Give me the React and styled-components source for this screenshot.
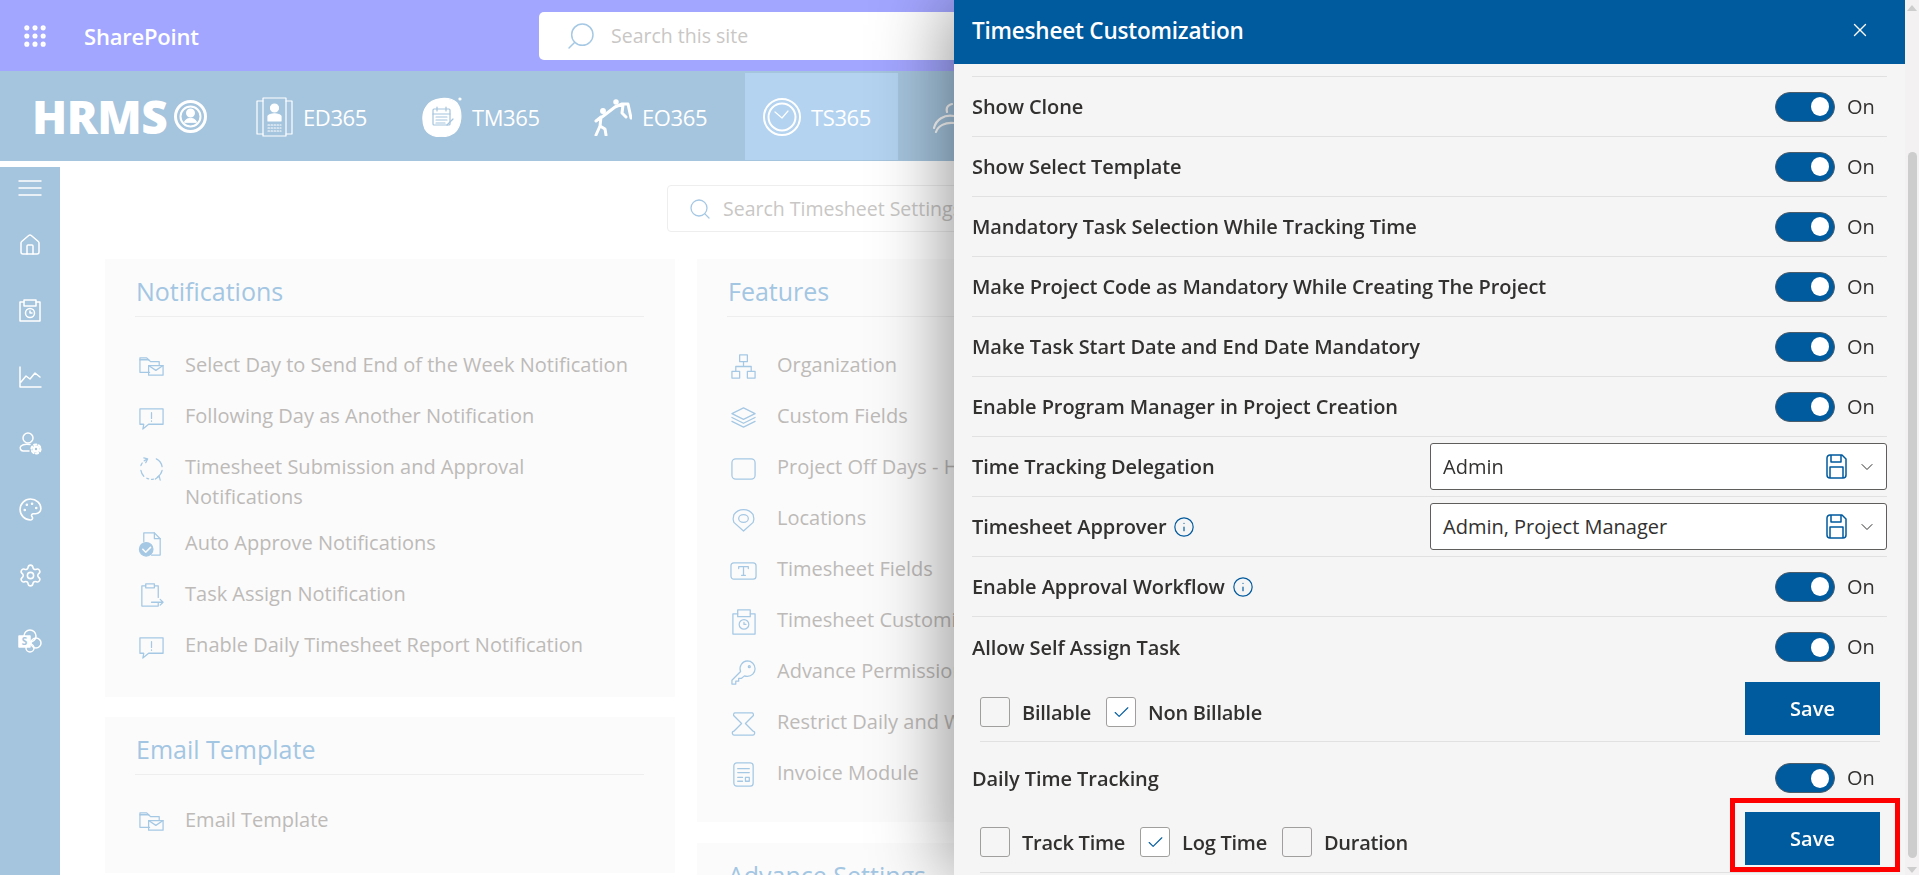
import React from "react";
import styled, { createGlobalStyle } from "styled-components";
import { Check, ChevronDown, X, Search, Home, Palette, Settings, Grip, Info } from "lucide-react";

const GlobalStyle = createGlobalStyle`
    html, body {
        margin: 0;
        padding: 0;
        height: 875px;
        overflow: hidden;
        background: #fff;
        font-family: "Open Sans", "Noto Sans", sans-serif;
    }
    * { box-sizing: border-box; }
`;

const Page = styled.div`
    display: flex;
    flex-direction: column;
    height: 875px;
    overflow: hidden;
`;

const TopBar = styled.header`
    display: flex;
    align-items: center;
    height: 71px;
    flex: none;
    background: #a3a6ff;
    color: #fff;
    padding-left: 21px;
`;

const AppName = styled.span`
    margin-left: 35px;
    width: 455px;
    font-size: 22px;
    font-weight: 600;
    letter-spacing: -0.2px;
`;

const SiteSearch = styled.div`
    display: flex;
    align-items: center;
    gap: 14px;
    width: 560px;
    height: 48px;
    padding-left: 26px;
    background: #fff;
    border-radius: 5px;
    color: #a5c8e4;
`;

const FlippedSearch = styled(Search)`
    transform: scaleX(-1);
`;

const Placeholder = styled.span`
    color: #c9c7c5;
    font-size: 19.5px;
    white-space: nowrap;
`;

const NavBar = styled.nav`
    display: flex;
    align-items: stretch;
    height: 90px;
    flex: none;
    background: #a5c4dd;
    padding-left: 32px;
`;

const Logo = styled.div`
    display: flex;
    align-items: center;
    gap: 7px;
    width: 208px;
    color: #fff;
    font-size: 46px;
    font-weight: 800;
    letter-spacing: -0.5px;
`;

const NavItem = styled.div`
    display: flex;
    align-items: center;
    gap: 10px;
    width: ${(p) => p.$w}px;
    margin: 2px 0 1px;
    padding-left: ${(p) => p.$pad || 16}px;
    background: ${(p) => (p.$active ? "#b3d3f0" : "transparent")};
    color: #fff;
    font-size: 22px;
    letter-spacing: -0.4px;
`;

const Content = styled.div`
    display: flex;
    flex: 1;
    min-height: 0;
    margin-top: 6px;
`;

const Sidebar = styled.aside`
    display: flex;
    flex-direction: column;
    align-items: center;
    flex: none;
    width: 60px;
    padding-top: 9px;
    background: #a5c4dd;
    color: #fff;
`;

const SideSlot = styled.div`
    display: flex;
    align-items: center;
    justify-content: center;
    flex: none;
    height: ${(p) => p.$h || 66}px;
    margin-bottom: ${(p) => p.$mb || 0}px;
`;

const Main = styled.main`
    flex: 1;
    min-width: 0;
    padding: 18px 0 0 45px;
`;

const SettingsSearch = styled.div`
    display: flex;
    align-items: center;
    gap: 11px;
    width: 560px;
    height: 47px;
    margin-left: 562px;
    margin-bottom: 27px;
    padding-left: 20px;
    background: #fff;
    border: 1px solid #eeeeee;
    border-radius: 4px;
    color: #a5c8e4;
`;

const Columns = styled.div`
    display: flex;
    gap: 22px;
    align-items: flex-start;
`;

const Column = styled.div`
    display: flex;
    flex-direction: column;
    gap: ${(p) => p.$gap}px;
    width: 570px;
    flex: none;
`;

const Card = styled.section`
    height: ${(p) => p.$h}px;
    padding: 14px 31px 0 30px;
    background: #fbfbfb;
`;

const CardTitle = styled.h2`
    margin: 0 0 ${(p) => p.$mb || 33}px;
    height: 44px;
    padding-left: 1px;
    border-bottom: 1px solid #eeeeee;
    color: #a3c6e3;
    font-size: 25px;
    line-height: 36px;
    font-weight: 400;
    white-space: nowrap;
`;

const ItemRow = styled.div`
    display: flex;
    align-items: flex-start;
    gap: 20px;
    min-height: 51px;
    padding-left: 3px;
    color: #bdbab8;
    font-size: 20px;
    line-height: 30px;
`;

const ItemIcon = styled.svg`
    flex: none;
    width: 27px;
    height: 27px;
    margin-top: 3px;
    color: #a5c8e4;
    fill: none;
    stroke: currentColor;
    stroke-width: 1.3;
    stroke-linejoin: round;
    stroke-linecap: round;
`;

const ItemText = styled.span`
    white-space: ${(p) => (p.$wrap ? "normal" : "nowrap")};
    width: ${(p) => (p.$wrap ? "380px" : "auto")};
    margin-bottom: ${(p) => (p.$wrap ? "16px" : 0)};
`;

const Panel = styled.aside`
    position: fixed;
    top: 0;
    right: 0;
    bottom: 0;
    width: 965px;
    display: flex;
    background: #f5f5f5;
    box-shadow: -6px 0 70px rgba(0, 0, 0, 0.42);
    overflow: hidden;
`;

const PanelMain = styled.div`
    flex: none;
    width: 951px;
`;

const PanelHeader = styled.header`
    display: flex;
    align-items: center;
    justify-content: space-between;
    height: 64px;
    padding: 0 34px 4px 18px;
    background: #005a9e;
    color: #fff;
    font-size: 22.5px;
    font-weight: 600;
    letter-spacing: -0.2px;
`;

const RowList = styled.div`
    margin: 12px 18px 0;
    border-top: 1px solid #e1e1e1;
`;

const Row = styled.div`
    display: flex;
    align-items: center;
    justify-content: space-between;
    height: 60px;
    border-bottom: 1px solid #e1e1e1;
`;

const SubRow = styled.div`
    display: flex;
    align-items: flex-start;
    justify-content: space-between;
    height: ${(p) => p.$h}px;
    padding-top: ${(p) => p.$top}px;
`;

const Label = styled.span`
    display: inline-flex;
    align-items: center;
    gap: 7px;
    padding-top: 1px;
    color: #323130;
    font-size: 20px;
    line-height: 30px;
    font-weight: 600;
    letter-spacing: -0.08px;
    white-space: nowrap;
`;

const InfoMark = styled(Info)`
    color: #005a9e;
`;

const ToggleWrap = styled.div`
    display: flex;
    align-items: center;
    gap: 12px;
    width: 112px;
    color: #323130;
    font-size: 20px;
    line-height: 30px;
`;

const ToggleTrack = styled.span`
    display: flex;
    align-items: center;
    justify-content: flex-end;
    width: 60px;
    height: 30px;
    padding-right: 5px;
    background: #005a9e;
    border: 1px solid #4b5d6b;
    border-radius: 15px;
`;

const ToggleKnob = styled.span`
    width: 18px;
    height: 19px;
    background: #fff;
    border-radius: 50%;
`;

const Dropdown = styled.div`
    display: flex;
    align-items: center;
    width: 457px;
    height: 47px;
    padding: 0 9px 0 12px;
    background: #fff;
    border: 1px solid #605e5c;
    border-radius: 3px;
    color: #323130;
    font-size: 20px;
`;

const DropValue = styled.span`
    flex: 1;
`;

const SaveGlyph = styled.svg`
    width: 21px;
    height: 25px;
    margin-right: 10px;
    fill: none;
    stroke: #005a9e;
    stroke-width: 1.5;
    stroke-linejoin: round;
`;

const CheckRow = styled.div`
    display: flex;
    align-items: flex-start;
    justify-content: space-between;
    height: ${(p) => p.$h}px;
    margin: 0 7px 0 8px;
    padding-top: ${(p) => p.$top}px;
    border-bottom: 1px solid #e1e1e1;
`;

const CheckGroup = styled.div`
    display: flex;
    align-items: center;
    gap: 15px;
    margin-top: 15px;
`;

const CheckItem = styled.label`
    display: flex;
    align-items: center;
    gap: 12px;
    color: #323130;
    font-size: 20px;
    font-weight: 600;
    letter-spacing: -0.25px;
`;

const CheckBox = styled.span`
    display: flex;
    align-items: center;
    justify-content: center;
    width: 30px;
    height: 30px;
    background: ${(p) => (p.$on ? "#fff" : "#f5f5f5")};
    border: 1px solid #a19f9d;
    border-radius: 3px;
    color: #005a9e;
`;

const SaveWrap = styled.div`
    position: relative;
    width: 135px;
    height: 53px;
`;

const SaveButton = styled.button`
    width: 100%;
    height: 100%;
    padding: 0;
    background: #005a9e;
    border: 0;
    color: #fff;
    font-family: inherit;
    font-size: 20px;
    font-weight: 600;
`;

const RedMark = styled.span`
    position: absolute;
    top: -14px;
    right: -20px;
    bottom: -7px;
    left: -15px;
    border: 5px solid #ff0000;
    pointer-events: none;
`;

const ScrollRail = styled.div`
    display: flex;
    flex-direction: column;
    align-items: center;
    flex: 1;
    padding-top: 5px;
    background: #f3f1f1;
`;

const ScrollArrow = styled.span`
    width: 0;
    height: 0;
    border-left: 5px solid transparent;
    border-right: 5px solid transparent;
    border-${(p) => (p.$down ? "top" : "bottom")}: 6px solid #cdcdcd;
`;

const ScrollThumb = styled.span`
    width: 9px;
    height: 706px;
    margin: 141px 0 9px;
    background: #cdcdcd;
    border-radius: 5px;
`;

const NavGlyph = styled.svg`
    flex: none;
    fill: none;
    stroke: #fff;
    stroke-linecap: round;
    stroke-linejoin: round;
`;

const SideGlyph = styled.svg`
    width: 24px;
    height: 24px;
    fill: none;
    stroke: #fff;
    stroke-width: 1.5;
    stroke-linecap: round;
    stroke-linejoin: round;
`;

const itemShapes = {
    folderMail: (
        <>
            <path d="M12 20H2V7h9l2 2h9v3" />
            <path d="M2 7V5h7l2 2" />
            <rect x="11" y="13" width="15" height="10" />
            <path d="M11 13l7.5 5 7.5-5" />
        </>
    ),
    alert: (
        <>
            <path d="M2 5h24v16H11l-6 5 1-5H2z" />
            <path d="M14 9v6M14 17.5v.5" />
        </>
    ),
    cycle: (
        <>
            <path d="M9 4.5A11 11 0 0 0 3 11" strokeDasharray="3 3" />
            <path d="M19 4a11 11 0 0 1 6 8" />
            <path d="M25 16a11 11 0 0 1-5 7" />
            <path d="M16 25a11 11 0 0 1-7-1" strokeDasharray="2 3" />
            <path d="M6 22a11 11 0 0 1-3-6" />
            <path d="M6 3l4 1-2 4M18 25l4-3 1 4" />
        </>
    ),
    fileCheck: (
        <>
            <path d="M6 11V2h11l6 6v17H14" />
            <path d="M17 2v6h6" />
            <circle cx="8.5" cy="19" r="7" fill="currentColor" />
            <path d="M5 19l3 3 5-5" stroke="#fbfbfb" strokeWidth="1.6" />
        </>
    ),
    clipArrow: (
        <>
            <path d="M8 4H4v21h17v-3M17 4h4v12" />
            <path d="M8 2h9v4H8z" />
            <path d="M14 21h12M23 18l3 3-3 3" />
        </>
    ),
    org: (
        <>
            <rect x="10" y="2" width="8" height="7" />
            <rect x="2" y="19" width="8" height="7" />
            <rect x="18" y="19" width="8" height="7" />
            <path d="M14 9v5M6 19v-5h16v5" />
        </>
    ),
    layers: (
        <>
            <path d="M14 4l12 6-12 6-12-6z" />
            <path d="M2 14l12 6 12-6M2 18l12 6 12-6" />
        </>
    ),
    square: <rect x="2" y="4" width="24" height="21" rx="4" />,
    pin: (
        <>
            <path d="M14 26L4 17a12 12 0 0 1 0-8 12 12 0 0 1 20 0 12 12 0 0 1 0 8z" />
            <ellipse cx="14" cy="13" rx="5" ry="4" />
        </>
    ),
    textBox: (
        <>
            <rect x="1" y="6" width="26" height="17" rx="3" />
            <path d="M9 12v-2h10v2M14 10v9M12 19h4" />
        </>
    ),
    saveClock: (
        <>
            <path d="M8 6H3v21h23V6h-5" />
            <rect x="8" y="2" width="13" height="7" />
            <circle cx="14.5" cy="17" r="5" />
            <path d="M14.5 15v2h2" />
        </>
    ),
    key: (
        <>
            <path d="M18 2a8 8 0 0 1 0 16 8 8 0 0 1-3-.5L12 20H9v3H6v3H2v-4l9-9a8 8 0 0 1 7-11z" />
            <circle cx="20" cy="8" r="1" />
        </>
    ),
    hourglass: <path d="M5 3h18a2 2 0 0 1 1 3l-8 8 8 8a2 2 0 0 1-1 4H5a2 2 0 0 1-1-4l8-8-8-8a2 2 0 0 1 1-3z" />,
    invoice: (
        <>
            <rect x="4" y="2" width="20" height="24" rx="3" />
            <path d="M8 8h12M8 12h12M8 17h5M8 21h5" />
            <rect x="16" y="17" width="4" height="4" />
        </>
    ),
};

const notifications = [
    ["folderMail", "Select Day to Send End of the Week Notification"],
    ["alert", "Following Day as Another Notification"],
    ["cycle", "Timesheet Submission and Approval Notifications", true],
    ["fileCheck", "Auto Approve Notifications"],
    ["clipArrow", "Task Assign Notification"],
    ["alert", "Enable Daily Timesheet Report Notification"],
];

const features = [
    ["org", "Organization"],
    ["layers", "Custom Fields"],
    ["square", "Project Off Days - Holidays"],
    ["pin", "Locations"],
    ["textBox", "Timesheet Fields"],
    ["saveClock", "Timesheet Customization"],
    ["key", "Advance Permission"],
    ["hourglass", "Restrict Daily and Weekly Hours"],
    ["invoice", "Invoice Module"],
];

const toggleRows = [
    "Show Clone",
    "Show Select Template",
    "Mandatory Task Selection While Tracking Time",
    "Make Project Code as Mandatory While Creating The Project",
    "Make Task Start Date and End Date Mandatory",
    "Enable Program Manager in Project Creation",
];

function Item({ icon, text, wrap }) {
    return (
        <ItemRow>
            <ItemIcon viewBox="0 0 28 28">{itemShapes[icon]}</ItemIcon>
            <ItemText $wrap={wrap}>{text}</ItemText>
        </ItemRow>
    );
}

function Toggle() {
    return (
        <ToggleWrap>
            <ToggleTrack>
                <ToggleKnob />
            </ToggleTrack>
            On
        </ToggleWrap>
    );
}

function Select({ value }) {
    return (
        <Dropdown>
            <DropValue>{value}</DropValue>
            <SaveGlyph viewBox="0 0 21 25">
                <path d="M4 1h12l4 4v16a3 3 0 0 1-3 3H4a3 3 0 0 1-3-3V4a3 3 0 0 1 3-3z" />
                <path d="M5 1v7h10V1M4 24V13h13v11" />
            </SaveGlyph>
            <ChevronDown size={20} strokeWidth={1.2} color="#323130" />
        </Dropdown>
    );
}

function Tick({ on, label }) {
    return (
        <CheckItem>
            <CheckBox $on={on}>{on && <Check size={19} strokeWidth={1.4} />}</CheckBox>
            {label}
        </CheckItem>
    );
}

export default function App() {
    return (
        <Page>
            <GlobalStyle />
            <TopBar>
                <Grip size={28} strokeWidth={2.4} />
                <AppName>SharePoint</AppName>
                <SiteSearch>
                    <FlippedSearch size={32} strokeWidth={1.1} />
                    <Placeholder>Search this site</Placeholder>
                </SiteSearch>
            </TopBar>

            <NavBar>
                <Logo>
                    HRMS
                    <NavGlyph width="33" height="33" viewBox="0 0 33 33" strokeWidth="3">
                        <circle cx="16.5" cy="16.5" r="15" />
                        <circle cx="16.5" cy="16.5" r="10" strokeWidth="2" />
                        <circle cx="16.5" cy="13" r="3" fill="#fff" />
                        <path d="M10.5 22c1-5 11-5 12 0z" fill="#fff" strokeWidth="1" />
                    </NavGlyph>
                </Logo>
                <NavItem $w={166}>
                    <NavGlyph width="37" height="40" viewBox="0 0 37 40" strokeWidth="1.2">
                        <path d="M7 4H1v33h6M30 4h6v33h-6" />
                        <rect x="7" y="1" width="23" height="38" />
                        <circle cx="18.5" cy="11" r="4" fill="#fff" />
                        <path d="M12 24v-5c2-3 11-3 13 0v5z" fill="#fff" />
                        <path d="M12 28h13M12 31h13M12 34h13" strokeDasharray="1.5 1.5" />
                    </NavGlyph>
                    ED365
                </NavItem>
                <NavItem $w={172}>
                    <NavGlyph width="40" height="40" viewBox="0 0 40 40" strokeWidth="1.2">
                        <path d="M4 10C10 0 28-1 35 6c6 8 5 24-3 30-9 6-24 5-29-4C0 25 0 16 4 10z" fill="#fff" />
                        <rect x="11" y="12" width="17" height="16" rx="1" stroke="#a5c4dd" />
                        <path d="M11 17h17M15 10v4M24 10v4M14 20h11M14 23h11M14 26h9M25 28l6-6" stroke="#a5c4dd" />
                        <circle cx="38" cy="2" r="1" fill="#fff" />
                    </NavGlyph>
                    TM365
                </NavItem>
                <NavItem $w={167}>
                    <NavGlyph width="38" height="38" viewBox="0 0 38 38" strokeWidth="3">
                        <circle cx="22" cy="4" r="2" fill="#fff" strokeWidth="1.5" />
                        <circle cx="9" cy="13" r="2.2" fill="#fff" strokeWidth="1.5" />
                        <path d="M7 19l-1 9-4 9M6 28l5 3 1 6M7 19l-5 4M8 19l13-10 7-3h6l3 14M29 7l-1 8 4 4" />
                    </NavGlyph>
                    EO365
                </NavItem>
                <NavItem $w={153} $pad={18} $active>
                    <NavGlyph width="38" height="38" viewBox="0 0 38 38" strokeWidth="2">
                        <circle cx="19" cy="19" r="18" />
                        <circle cx="19" cy="19" r="13.5" />
                        <path d="M12 14l7 6 6-7" strokeWidth="1.2" />
                    </NavGlyph>
                    TS365
                </NavItem>
                <NavItem $w={54} $pad={35}>
                    <NavGlyph width="38" height="34" viewBox="0 0 38 34" strokeWidth="2.2">
                        <path d="M1 28c2-8 10-14 20-12M3 32c2-6 9-10 18-9M19 4c-4 1-6 4-5 8" />
                    </NavGlyph>
                </NavItem>
            </NavBar>

            <Content>
                <Sidebar>
                    <SideSlot $h={24} $mb={12}>
                        <SideGlyph viewBox="0 0 24 24" strokeWidth="1.3">
                            <path d="M1 5h22M1 12h22M1 19h22" />
                        </SideGlyph>
                    </SideSlot>
                    <SideSlot><Home size={24} strokeWidth={1.5} /></SideSlot>
                    <SideSlot>
                        <SideGlyph viewBox="0 0 24 24">
                            <path d="M6 3H2v19h20V3h-4" />
                            <rect x="6" y="1" width="12" height="6" />
                            <circle cx="12" cy="14" r="4.5" />
                            <path d="M12 12v2h2" />
                        </SideGlyph>
                    </SideSlot>
                    <SideSlot>
                        <SideGlyph viewBox="0 0 24 24">
                            <path d="M2 2v20h21M3 17l5-6 4 3 5-6 5 4" />
                        </SideGlyph>
                    </SideSlot>
                    <SideSlot>
                        <SideGlyph viewBox="0 0 24 24">
                            <circle cx="10" cy="7" r="5" />
                            <path d="M11 20H5a3 3 0 0 1-2-5c2-2 6-2 9-1.5" />
                            <circle cx="18" cy="18" r="3.5" fill="#fff" stroke="none" />
                            <circle cx="18" cy="18" r="4.5" strokeWidth="2.2" strokeDasharray="2.2 2.5" />
                            <circle cx="18" cy="18" r="1.2" fill="#a5c4dd" stroke="none" />
                        </SideGlyph>
                    </SideSlot>
                    <SideSlot><Palette size={25} strokeWidth={1.5} /></SideSlot>
                    <SideSlot><Settings size={25} strokeWidth={1.5} /></SideSlot>
                    <SideSlot>
                        <SideGlyph viewBox="0 0 24 24">
                            <circle cx="12" cy="7" r="6" />
                            <circle cx="18" cy="14" r="5" />
                            <circle cx="12" cy="19" r="4" />
                            <rect x="1" y="7" width="11" height="11" fill="#fff" />
                            <text x="6.5" y="16" textAnchor="middle" fontSize="10" fontWeight="700" fill="#a5c4dd" stroke="none">S</text>
                        </SideGlyph>
                    </SideSlot>
                </Sidebar>

                <Main>
                    <SettingsSearch>
                        <Search size={24} strokeWidth={1.3} />
                        <Placeholder>Search Timesheet Settings</Placeholder>
                    </SettingsSearch>
                    <Columns>
                        <Column $gap={20}>
                            <Card $h={438}>
                                <CardTitle>Notifications</CardTitle>
                                {notifications.map(([icon, text, wrap]) => (
                                    <Item key={text} icon={icon} text={text} wrap={wrap} />
                                ))}
                            </Card>
                            <Card $h={156}>
                                <CardTitle $mb={30}>Email Template</CardTitle>
                                <Item icon="folderMail" text="Email Template" />
                            </Card>
                        </Column>
                        <Column $gap={21}>
                            <Card $h={563}>
                                <CardTitle>Features</CardTitle>
                                {features.map(([icon, text]) => (
                                    <Item key={text} icon={icon} text={text} />
                                ))}
                            </Card>
                            <Card $h={100}>
                                <CardTitle>Advance Settings</CardTitle>
                            </Card>
                        </Column>
                    </Columns>
                </Main>
            </Content>

            <Panel>
                <PanelMain>
                    <PanelHeader>
                        Timesheet Customization
                        <X size={22} strokeWidth={1.4} />
                    </PanelHeader>
                    <RowList>
                        {toggleRows.map((label) => (
                            <Row key={label}>
                                <Label>{label}</Label>
                                <Toggle />
                            </Row>
                        ))}
                        <Row>
                            <Label>Time Tracking Delegation</Label>
                            <Select value="Admin" />
                        </Row>
                        <Row>
                            <Label>
                                Timesheet Approver
                                <InfoMark size={22} strokeWidth={1.3} />
                            </Label>
                            <Select value="Admin, Project Manager" />
                        </Row>
                        <Row>
                            <Label>
                                Enable Approval Workflow
                                <InfoMark size={22} strokeWidth={1.3} />
                            </Label>
                            <Toggle />
                        </Row>
                        <SubRow $h={62} $top={15}>
                            <Label>Allow Self Assign Task</Label>
                            <Toggle />
                        </SubRow>
                        <CheckRow $h={63} $top={3}>
                            <CheckGroup>
                                <Tick label="Billable" />
                                <Tick on label="Non Billable" />
                            </CheckGroup>
                            <SaveWrap>
                                <SaveButton>Save</SaveButton>
                            </SaveWrap>
                        </CheckRow>
                        <SubRow $h={70} $top={21}>
                            <Label>Daily Time Tracking</Label>
                            <Toggle />
                        </SubRow>
                        <CheckRow $h={61} $top={0}>
                            <CheckGroup>
                                <Tick label="Track Time" />
                                <Tick on label="Log Time" />
                                <Tick label="Duration" />
                            </CheckGroup>
                            <SaveWrap>
                                <SaveButton>Save</SaveButton>
                                <RedMark />
                            </SaveWrap>
                        </CheckRow>
                    </RowList>
                </PanelMain>
                <ScrollRail>
                    <ScrollArrow />
                    <ScrollThumb />
                    <ScrollArrow $down />
                </ScrollRail>
            </Panel>
        </Page>
    );
}
